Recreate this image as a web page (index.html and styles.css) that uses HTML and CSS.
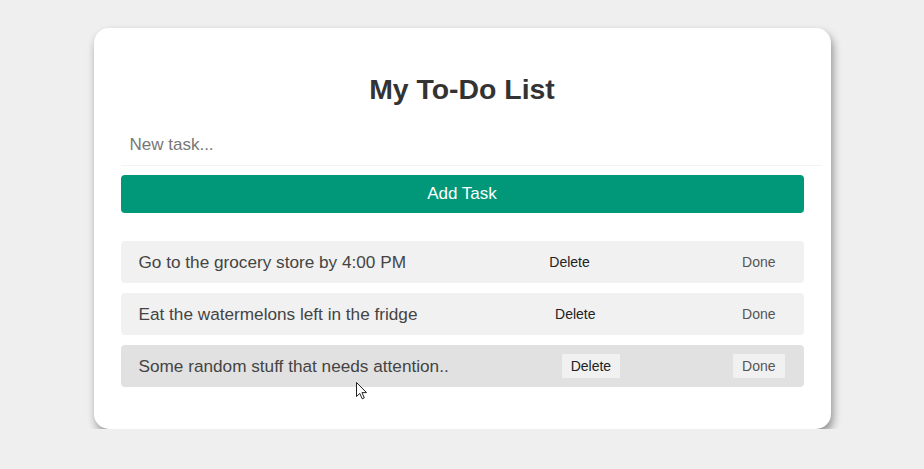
FILE: index.html
```html
<!DOCTYPE html>
<html>
<head>
  <title>My To-Do List</title>
  <link rel="stylesheet" href="styles.css">
</head>
<body>
  <div class="container">
    <h1>My To-Do List</h1>
    <input type="text" class="task-input" placeholder="New task...">
    <button class="add-btn">Add Task</button>
    <ul class="task-list">
      <li class="task">
        <span class="task-text">Go to the grocery store by 4:00 PM</span>
        <button class="delete-btn">Delete</button>
        <button class="done-btn">Done</button>
      </li>
      <li class="task">
        <span class="task-text">Eat the watermelons left in the fridge</span>
        <button class="delete-btn">Delete</button>
        <button class="done-btn">Done</button>
      </li>
      <li class="task hover">
        <span class="task-text">Some random stuff that needs attention..</span>
        <button class="delete-btn">Delete</button>
        <button class="done-btn">Done</button>
        <svg class="cursor" width="13" height="20" viewBox="0 0 13 20">
          <path d="M1.5 1.5 L1.5 15.5 L4.8 12.4 L7.2 17.8 L9.3 16.9 L7 11.6 L11.5 11.6 Z" fill="#fff" stroke="#222" stroke-width="1" stroke-linejoin="round"/>
        </svg>
      </li>
    </ul>
  </div>
</body>
</html>
```

FILE: styles.css
```css
body {
  font-family: "Liberation Sans", Arial, Helvetica, sans-serif;
  background-color: #efefef;
  margin: 0;
  padding: 28px 0 0;
}
.container {
  width: 683px;
  margin: 0 auto;
  padding: 27px;
  background: #fff;
  border-radius: 15px;
  box-shadow: 2px 5px 8px rgba(0, 0, 0, 0.4);
}
h1 {
  text-align: center;
  color: #333;
  font-size: 28.4px;
  margin: 18px 0 20px;
  line-height: 32px;
}
.task-input {
  display: block;
  width: 100%;
  padding: 10px 9px;
  font-family: inherit;
  font-size: 17px;
  color: #333;
  border: none;
  border-bottom: 1px solid #f3f3f3;
  outline: none;
}
.task-input::placeholder {
  color: #777;
}
.add-btn {
  display: block;
  width: 100%;
  height: 38px;
  margin-top: 9px;
  background: #009879;
  color: #fff;
  border: none;
  border-radius: 4px;
  font-family: inherit;
  font-size: 17px;
}
.task-list {
  list-style: none;
  margin: 28px 0 15px;
  padding: 0;
  display: flex;
  flex-direction: column;
  gap: 10px;
}
.task {
  position: relative;
  display: flex;
  align-items: center;
  justify-content: space-between;
  height: 42px;
  box-sizing: border-box;
  padding: 0 19px 0 18px;
  background: #f1f1f1;
  border-radius: 4px;
}
.task.hover {
  background: #e1e1e1;
}
.task-text {
  font-size: 17.2px;
  color: #444;
}
.delete-btn,
.done-btn {
  font-family: inherit;
  font-size: 14px;
  padding: 4px 9px;
  line-height: 16px;
  border: none;
  background: #f1f1f1;
}
.delete-btn {
  color: #222;
}
.done-btn {
  color: #555;
}
.cursor {
  position: absolute;
  left: 234px;
  top: 36px;
}
```
